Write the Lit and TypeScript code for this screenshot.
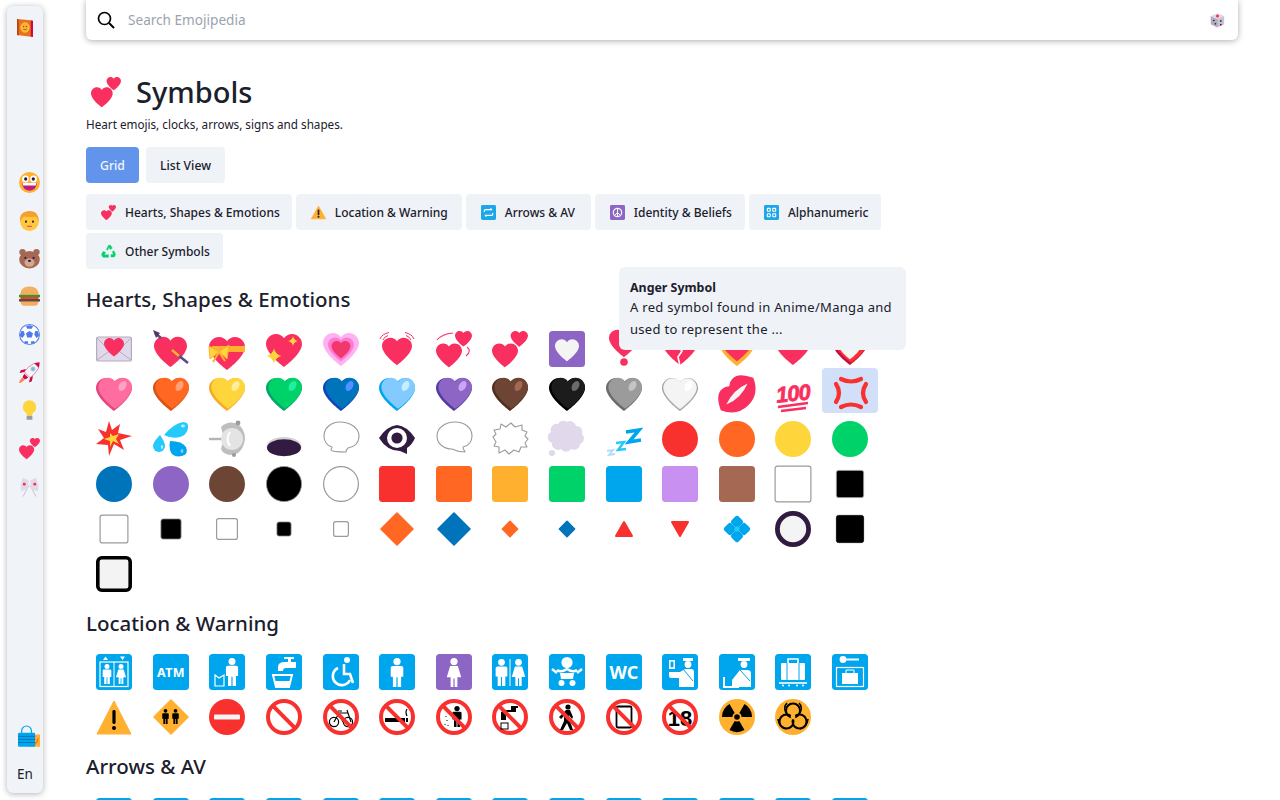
import { LitElement, html, css, svg } from "lit";
import { customElement } from "lit/decorators.js";

const R = "#F92F60", RED = "#F8312F", OR = "#FF6723", AM = "#FFB02E", YE = "#FFD53C", GR = "#00D26A", BL = "#00A6ED", DB = "#0074BA", PU = "#8D65C5", LP = "#C790F1", BR = "#6D4534", LB = "#A56953", GY = "#9B9B9B", DK = "#321B41", WH = "#F4F4F4";
const HP = "M26 2c-3.4 0-6.3 1.7-8 4.3C16.3 3.7 13.4 2 10 2 4.5 2 0 6.5 0 12c0 10 18 23 18 23s18-13 18-23c0-5.5-4.5-10-10-10z";
const hp = (x: number, y: number, w: number, c: string) => svg`<path d=${HP} fill=${c} transform="translate(${x} ${y}) scale(${w / 36})"/>`;
const star = (x: number, y: number, r: number, c: string) => svg`<path fill=${c} d="M${x} ${y - r}Q${x + r * .2} ${y - r * .2} ${x + r} ${y}Q${x + r * .2} ${y + r * .2} ${x} ${y + r}Q${x - r * .2} ${y + r * .2} ${x - r} ${y}Q${x - r * .2} ${y - r * .2} ${x} ${y - r}Z"/>`;
const shade = (dark: string, body: string, hi: string) => svg`${hp(0, 0, 36, dark)}<g transform="translate(2.4 0) scale(.935)">${hp(0, 0, 36, body)}</g><ellipse cx="26.5" cy="10" rx="3.4" ry="5.4" transform="rotate(30 26.5 10)" fill=${hi}/>`;
const circ = (c: string) => svg`<circle cx="18" cy="18" r="18" fill=${c}/>`;
const sq = (c: string, inner: unknown = "") => svg`<rect width="36" height="36" rx="3.5" fill=${c}/>${inner}`;
const box = (s: number, fill: string, stroke: string, sw = 1.2, rx = 2.2) => { const o = (36 - s) / 2; return svg`<rect x=${o + sw / 2} y=${o + sw / 2} width=${s - sw} height=${s - sw} rx=${rx} fill=${fill} stroke=${stroke} stroke-width=${sw}/>`; };
const dia = (r: number, c: string) => svg`<path d="M18 ${18 - r}L${18 + r} 18L18 ${18 + r}L${18 - r} 18Z" fill=${c} stroke=${c} stroke-width="1.6" stroke-linejoin="round"/>`;
const man = (x: number, y: number, h: number, c = "#fff") => svg`<g transform="translate(${x} ${y}) scale(${h / 24})" fill=${c}><circle cy="2.9" r="3"/><path d="M-5.2 8Q-5.2 6.6-3.6 6.6H3.6Q5.2 6.6 5.2 8V15.5H3.4V24H.5V16H-.5V24H-3.4V15.5H-5.2Z"/></g>`;
const wom = (x: number, y: number, h: number, c = "#fff") => svg`<g transform="translate(${x} ${y}) scale(${h / 24})" fill=${c}><circle cy="2.9" r="3"/><path d="M-3.2 6.6H3.2L6 16H2.8V24H.5V17H-.5V24H-2.8V16H-6Z"/></g>`;
const spk = (tail: string, fill: string, stroke: string, sw = 1.1) => svg`<path d=${tail} fill=${fill} stroke=${stroke} stroke-width=${sw} stroke-linejoin="round"/>`;
const twoHearts = svg`${hp(0, 11, 26, R)}${hp(18.6, -1, 17.4, R)}`;
const ban = (inner: unknown) => svg`<circle cx="18" cy="18" r="16" fill="#fff" stroke=${RED} stroke-width="4"/>${inner}<path d="M6.7 6.7L29.3 29.3" stroke=${RED} stroke-width="4"/>`;

const heartsGrid: unknown[] = [
  svg`<rect x=".6" y="6" width="34.8" height="24" rx="1.6" fill="#E1D8EC" stroke="#B4ACBC" stroke-width="1.2"/><path d="M1 7L12 18M35 7L24 18M1 29L12 21M35 29L24 21" stroke="#B4ACBC" fill="none"/>${hp(8, 6, 20, R)}`,
  svg`${hp(1, 4, 33, R)}<path d="M2 2L8 7 M20 20L35 32" stroke="#5B4B8A" stroke-width="2.6"/><path d="M0 -1L7 2L3 7Z" fill="#533566"/><path d="M19 19L26 25" stroke=${AM} stroke-width="2.6"/>`,
  svg`${hp(0, 4, 36, R)}<path d="M3 15H36V21H3Z" fill=${AM}/><path d="M0 15L10 21L1 28Z M20 14L10 21L18 28Z" fill=${YE} stroke=${AM}/><path d="M10 21L4 31M10 21L16 30" stroke=${AM} stroke-width="2"/>`,
  svg`${hp(0, 1, 36, R)}${star(8, 25, 7.5, YE)}${star(27, 10, 4.8, YE)}`,
  svg`${hp(0, 0, 36, "#FFB2F2")}<g transform="translate(5 5) scale(.72)">${hp(0, 0, 36, "#FF7BD2")}</g>${hp(8.5, 9, 19, "#F0386B")}`,
  svg`${hp(3, 5, 30, R)}<path d="M1 8Q3 3 10 1.5M4 9Q5 6 9 4.5M35 8Q33 3 26 1.5M32 9Q31 6 27 4.5" stroke=${R} stroke-width="1" fill="none"/>`,
  svg`${hp(0, 11, 26, R)}${hp(19, -1, 17, R)}<path d="M1 9Q6 3 17 2M31 16Q36 20 30 25" stroke=${R} stroke-width="1.1" fill="none"/>`,
  twoHearts,
  sq(PU, svg`<g transform="translate(6 7)">${hp(0, 0, 24, WH)}</g>`),
  svg`${hp(3, -3, 30, R)}<circle cx="18" cy="31" r="3.8" fill=${R}/>`,
  svg`${hp(0, -1, 36, R)}<path d="M18 8L15 15L20 20L16 26L18 35" stroke="#fff" stroke-width="1.6" fill="none"/>`,
  svg`<path d="M6 10Q10 2 18 0Q26 2 31 10Z" fill=${AM}/>${hp(0, 0, 36, AM)}<g transform="translate(2 -1) scale(.89)">${hp(0, 0, 36, R)}</g>`,
  svg`${hp(0, -1, 36, R)}`,
  svg`${hp(0, -1, 36, "#CA0B4A")}<g transform="translate(2.4 -1) scale(.935)">${hp(0, 0, 36, RED)}</g>${hp(7, 7, 22, WH)}`,
  shade("#E5447F", "#FF6DA0", "#FFA3C4"),
  shade("#D9520F", OR, "#FFA27A"),
  shade("#F9A826", YE, "#FFEC9C"),
  shade("#00A76A", GR, "#21F0A0"),
  shade("#1345B7", DB, "#5092FF"),
  shade("#00A6ED", "#83CBFF", "#C3EFFF"),
  shade("#533BA5", PU, "#C9A6F5"),
  shade("#4E2F20", BR, "#A56953"),
  shade("#000", "#1C1C1C", "#6B6B6B"),
  shade("#6B6B6B", GY, "#C4C4C4"),
  svg`${hp(0, 0, 36, GY)}<g transform="translate(1.2 1) scale(.935)">${hp(0, 0, 36, "#D3D3D3")}</g><g transform="translate(1.5 .5) scale(.92)">${hp(0, 0, 36, WH)}</g><ellipse cx="26.5" cy="10" rx="3.4" ry="5.4" transform="rotate(30 26.5 10)" fill="#fff"/>`,
  svg`<g transform="rotate(-45 18 18)"><path d="M-5 18Q2 3 11 4Q15 4 18 7Q21 4 25 4Q34 3 41 18Q34 34 18 34Q2 34 -5 18Z" fill=${R}/><path d="M3 18Q18 12 33 18Q18 24 3 18Z" fill=${WH}/></g>`,
  svg`<text x="1" y="25" class="hundred" fill=${R} stroke=${R} stroke-width=".7" transform="rotate(-6 18 18)">100</text><path d="M3 31L33 27M6 35L31 32" stroke=${R} stroke-width="2.4"/>`,
  svg`<g fill="none" stroke=${RED} stroke-width="4.2" stroke-linecap="round"><path d="M9 3Q19 8 29 3M9 31Q19 26 29 31M4 8Q10 17 4 26M34 8Q28 17 34 26"/></g>`,
  svg`<path d="M13 0L16 9L24 3L22 12L36 15L24 19L28 29L18 23L13 35L12 24L0 23L8 17L2 8L10 11Z" fill=${RED}/><path d="M14 12L17 15L23 13L20 18L23 23L17 20L14 26L14 20L8 18L14 16Z" fill=${YE}/>`,
  svg`<path d="M11 14Q20 3 30 1Q36 1 35 7Q34 14 27 16Q19 18 11 14Z" fill="#26C9FC"/><path d="M7 14Q12 21 12 25A6 6 0 0 1 0 25Q0 21 7 14Z" fill="#26C9FC"/><path d="M17 20Q29 20 33 26Q36 33 29 35Q19 37 17 29Q16 24 17 20Z" fill=${BL}/><ellipse cx="30" cy="5" rx="2" ry="1.4" fill="#C3EFFF"/><ellipse cx="9" cy="26" rx="1" ry="2" fill="#C3EFFF"/><ellipse cx="29" cy="30" rx="1.4" ry="2" fill="#83CBFF"/>`,
  svg`<path d="M0 18H14" stroke="#B4B4B4" stroke-width="2.4"/><path d="M12 6Q18 0 26 2Q36 6 36 18Q34 32 24 34Q14 34 12 28Q16 18 12 6Z" fill="#BEBEBE"/><circle cx="23" cy="18" r="11" fill="#E4E4E4"/><path d="M21 11Q16 18 21 25" stroke="#fff" stroke-width="2" fill="none"/><circle cx="29" cy="2" r="2.4" fill=${GY}/><circle cx="25" cy="34" r="2" fill=${GY}/>`,
  svg`<ellipse cx="18" cy="25.5" rx="17.5" ry="9.5" fill="#D3D3D3"/><ellipse cx="18" cy="26.7" rx="17" ry="8.5" fill=${DK}/>`,
  spk("M17 1C27 1 36 7 36 15C36 22 31 26 25 27C23 29 23 31 23 31C22 31 9 31 8 29C8 28 9 27 9 26C4 25 1 20 1 15C1 7 8 1 17 1Z", "#fff", GY),
  svg`<path d="M0 17Q8 5 18 4Q28 5 36 17Q33 24 28 27V33L21 30Q8 30 0 17Z" fill=${DK}/><circle cx="18" cy="17" r="10" fill="#fff"/><circle cx="18" cy="17" r="5.6" fill=${DK}/>`,
  spk("M19 1C29 1 36 7 36 15C36 20 33 25 27 26C27 28 28 29 29 31C22 31 18 29 16 28C8 28 1 23 1 15C1 7 9 1 19 1Z", "#fff", GY),
  svg`<path d="M1 16L4 13L2 9L8 8L9 3L14 6L19 2L23 6L30 4L30 9L35 11L33 15L36 18L33 22L35 26L29 26L27 31L22 29L17 33L13 29L7 32L7 26L2 25L4 21Z" fill="#fff" stroke=${GY} stroke-width="1.1" stroke-linejoin="round"/>`,
  svg`<path d="M18 1a6 6 0 0 1 9 4a6 6 0 0 1 6 8a6 6 0 0 1 -2 10a6 6 0 0 1 -9 5a6 6 0 0 1 -10 0a6 6 0 0 1 -9 -6a6 6 0 0 1 -1 -11a6 6 0 0 1 7 -8a6 6 0 0 1 9 -2Z" fill="#E1D8EC"/><circle cx="3" cy="32" r="3" fill="#E1D8EC"/>`,
  svg`<g fill="none" stroke-linejoin="miter"><path d="M20 11L33 9L23 21L35 19" stroke=${BL} stroke-width="3.6"/><path d="M10 22L18 21L12 29L20 28" stroke="#26C9FC" stroke-width="2.4"/><path d="M1 30L7 29L3 34L9 33" stroke="#AEDDFF" stroke-width="1.8"/></g>`,
  circ(RED), circ(OR), circ(YE), circ(GR),
  circ(DB), circ(PU), circ(BR),
  svg`<circle cx="18" cy="18" r="17.6" fill="#000" stroke=${GY} stroke-width=".8"/>`,
  svg`<circle cx="18" cy="18" r="17.4" fill="#fff" stroke=${GY} stroke-width="1.2"/>`,
  sq(RED), sq(OR), sq(AM), sq(GR), sq(BL), sq(LP), sq(LB),
  box(37, "#fff", GY), box(28, "#000", GY, .8),
  box(29, "#fff", GY), box(21, "#000", GY, .8), box(22, "#fff", GY), box(15, "#000", GY, .8), box(16, "#fff", GY),
  dia(16, OR), dia(16, DB), dia(7.6, OR), dia(7.6, DB),
  svg`<path d="M18 11L26 25H10Z" fill=${RED} stroke=${RED} stroke-width="2" stroke-linejoin="round"/>`,
  svg`<path d="M10 11H26L18 25Z" fill=${RED} stroke=${RED} stroke-width="2" stroke-linejoin="round"/>`,
  svg`<g fill=${BL}><rect x="13" y="13" width="10" height="10" rx="2.4" transform="rotate(45 18 18) translate(-5 -5)"/><rect x="13" y="13" width="10" height="10" rx="2.4" transform="rotate(45 18 18) translate(5 -5)"/><rect x="13" y="13" width="10" height="10" rx="2.4" transform="rotate(45 18 18) translate(-5 5)"/><rect x="13" y="13" width="10" height="10" rx="2.4" transform="rotate(45 18 18) translate(5 5)"/></g><circle cx="18" cy="18" r="2.6" fill="#26C9FC"/>`,
  svg`<circle cx="18" cy="18" r="15.6" fill=${WH} stroke=${DK} stroke-width="4.8"/>`,
  box(28, "#000", "#000", .8),
  box(36, "#F3F3F3", "#000", 3.6, 4),
];

const locGrid: unknown[] = [
  sq(BL, svg`<rect x="4" y="8" width="28" height="24.5" fill="none" stroke="#fff" stroke-width="1.2"/><path d="M18 8V32.5" stroke="#fff"/><path d="M9.5 2.6L12 6H7Z M24 2.6H29L26.5 6Z" fill="#fff"/>${man(11, 10, 20)}${wom(25, 10, 20)}`),
  sq(BL, svg`<text x="18" y="22.5" class="atm" fill="#fff">ATM</text>`),
  sq(BL, svg`${man(23, 4, 28)}<path d="M6 21V32H15V21L10 24Z" fill="none" stroke="#fff" stroke-width="1.2"/>`),
  sq(BL, svg`<path d="M12 13Q12 8 19 8H22V5H18V3H28V5H25V8H30V14H20Q17 14 17 17H12Z" fill="#fff"/><path d="M7 21H26L23 33H10Z" fill="none" stroke="#fff" stroke-width="2"/><path d="M9 27H24L23 33H10Z" fill="#fff"/>`),
  sq(BL, svg`<circle cx="24" cy="6" r="3" fill="#fff"/><path d="M21 10V20H27L30 29" fill="none" stroke="#fff" stroke-width="2.6"/><path d="M15 14A9 9 0 1 0 27 26" fill="none" stroke="#fff" stroke-width="2.6"/>`),
  sq(BL, man(18, 4, 29)),
  sq(PU, wom(18, 4, 29)),
  sq(BL, svg`${man(9.5, 5, 27)}<path d="M18 5V32" stroke="#fff"/>${wom(26.5, 5, 27)}`),
  sq(BL, svg`<circle cx="18" cy="8.5" r="5.6" fill="#fff"/><path d="M8 16Q12 19 18 15Q24 19 28 16M3 15L8 19M33 15L28 19" fill="none" stroke="#fff" stroke-width="2.4"/><path d="M11 19H25L24 25H12Z" fill="#fff"/><circle cx="12.5" cy="29" r="3" fill="#fff"/><circle cx="23.5" cy="29" r="3" fill="#fff"/>`),
  sq(BL, svg`<text x="18" y="24.5" class="wc" fill="#fff">WC</text>`),
  sq(BL, svg`<rect x="7" y="6" width="6" height="9" fill="#fff"/><rect x="8.6" y="7.6" width="2.8" height="5.6" fill=${BL}/><path d="M21 4H31V7H21Z" fill="#fff"/><circle cx="26" cy="10.5" r="3.4" fill="#fff"/><path d="M7 18H18L23 15H29Q32 15 32 18V33H17V24H9Q7 24 7 22Z" fill="#fff"/><path d="M21 15L31 27" stroke=${BL}/>`),
  sq(BL, svg`<path d="M19 4H31V7H19Z" fill="#fff"/><circle cx="25" cy="10.5" r="3.4" fill="#fff"/><path d="M13 26L21 16H28Q32 16 32 19V33H13Z" fill="#fff"/><path d="M21 16L31 27" stroke=${BL}/><path d="M5 23V33H20" fill="none" stroke="#fff" stroke-width="2"/>`),
  sq(BL, svg`<rect x="6" y="9" width="24" height="17" rx="1" fill="#fff"/><path d="M13 9V5H23V9" fill="none" stroke="#fff" stroke-width="1.6"/><path d="M12 9V26M24 9V26" stroke=${BL}/><path d="M4 29H32" stroke="#fff" stroke-width="1.6"/><path d="M7 31.5h2M13 31.5h2M21 31.5h2M27 31.5h2" stroke="#fff" stroke-width="1.4"/>`),
  sq(BL, svg`<circle cx="11" cy="5.5" r="3.4" fill="#fff"/><path d="M14 4.5H27V6.5H14Z" fill="#fff"/><rect x="4.5" y="13.5" width="27" height="19" fill="none" stroke="#fff" stroke-width="1.2"/><rect x="10" y="19" width="16" height="11" fill="#fff"/><path d="M14 19V16H22V19" fill="none" stroke="#fff"/>`),
  svg`<path d="M18 2L35 35H1Z" fill=${AM} stroke=${AM} stroke-linejoin="round"/><rect x="16.4" y="11" width="3.2" height="14" rx="1.4" fill="#000"/><circle cx="18" cy="29" r="2" fill="#000"/>`,
  svg`${dia(17, AM)}${man(12.5, 10, 15, "#000")}${man(22.5, 10, 15, "#000")}`,
  svg`${circ(RED)}<rect x="5" y="15.5" width="26" height="5" rx="1" fill=${WH}/>`,
  ban(""),
  ban(svg`<g fill="none" stroke="#000" stroke-width="1.2"><circle cx="11" cy="23" r="4.6"/><circle cx="25" cy="23" r="4.6"/><path d="M11 23L16 14H25L28 23M16 14L20 23M15 12H19M25 14L24 11"/></g>`),
  ban(svg`<rect x="6" y="19" width="20" height="4" fill="#000"/><rect x="27" y="19" width="2" height="4" fill="#000"/><path d="M28 17Q26 13 28 10" stroke="#000" fill="none" stroke-width="1.2"/>`),
  ban(svg`${man(21, 7, 21, "#000")}<path d="M12 12v1M10 17v1M11 21v1M9 25v1M12 26v1" stroke="#000"/>`),
  ban(svg`<path d="M9 13H24V9H19V11H14Z M9 13H14V21H9Z M19 9H26V7H19Z" fill="#000"/><rect x="9" y="24" width="7" height="6" fill="none" stroke="#000"/>`),
  ban(svg`<circle cx="19" cy="8" r="2.6" fill="#000"/><path d="M17 11H21L24 18L23 20L20 16L21 22L24 31H21L18 24L14 31H11L15 22L15 17L12 20L10 18Z" fill="#000"/>`),
  ban(svg`<rect x="10.5" y="7.5" width="15" height="21" rx="1.4" fill="none" stroke="#000" stroke-width="1.8"/>`),
  ban(svg`<text x="18" y="26.5" class="eighteen" fill="#000">18</text>`),
  svg`${circ(AM)}<path d="M18 18L25.5 31A15 15 0 0 1 10.5 31Z M18 18L25.5 5A15 15 0 0 1 33 18Z M18 18L3 18A15 15 0 0 1 10.5 5Z" fill="#000"/><circle cx="18" cy="18" r="4.6" fill=${AM}/><circle cx="18" cy="18" r="2.8" fill="#000"/>`,
  svg`${circ(AM)}<g fill="none" stroke="#000" stroke-width="2"><circle cx="18" cy="11.5" r="7"/><circle cx="11.5" cy="22.5" r="7"/><circle cx="24.5" cy="22.5" r="7"/><path d="M12 4Q8 8 11 14M24 4Q28 8 25 14M3 20Q4 28 11 30M33 20Q32 28 25 30" stroke-width="1.6"/></g><circle cx="18" cy="18" r="2.4" fill=${AM}/>`,
];

const grin = svg`${circ(AM)}<circle cx="11" cy="12" r="5.8" fill="#fff"/><circle cx="25" cy="12" r="5.8" fill="#fff"/><circle cx="11.5" cy="12" r="2.8" fill=${DK}/><circle cx="24.5" cy="12" r="2.8" fill=${DK}/><path d="M5 19H31Q29 32 18 32Q7 32 5 19Z" fill="#BB1D80"/><path d="M6 19H30L29 23H7Z" fill="#fff"/>`;
const person = svg`<circle cx="18" cy="20" r="16" fill="#FFC83D"/><path d="M2 21Q-1 5 14 2Q34 -1 34 21Q32 13 28 11Q18 13 9 11Q4 13 2 21Z" fill="#F59F2E"/><circle cx="12" cy="20" r="1.8" fill=${DK}/><circle cx="24" cy="20" r="1.8" fill=${DK}/><path d="M14 28H22" stroke="#E5447F" stroke-width="2"/>`;
const bear = svg`<circle cx="6" cy="7" r="5.5" fill=${LB}/><circle cx="30" cy="7" r="5.5" fill=${LB}/><ellipse cx="18" cy="20" rx="17.6" ry="15" fill=${LB}/><ellipse cx="18" cy="25" rx="8.6" ry="7" fill="#D3A88F"/><circle cx="11" cy="17" r="1.8" fill=${DK}/><circle cx="25" cy="17" r="1.8" fill=${DK}/><ellipse cx="18" cy="22" rx="2.6" ry="2" fill=${DK}/>`;
const burger = svg`<path d="M2 15Q3 1 18 1Q33 1 34 15Z" fill="#F3AD61"/><path d="M8 7l1 1M14 4l1 1M21 5l1 1M27 8l1 1M17 9l1 1" stroke="#FFE3A8" stroke-width="1.4"/><path d="M0 15H36V19Q30 22 24 19Q18 22 12 19Q6 22 0 19Z" fill="#44911B"/><path d="M3 19H33V22H3Z" fill=${RED}/><rect y="22" width="36" height="5" rx="2" fill=${BR}/><path d="M3 27H33Q33 34 27 34H9Q3 34 3 27Z" fill="#F3AD61"/>`;
const ball = svg`<circle cx="18" cy="18" r="17" fill="#fff" stroke="#5B7FE8" stroke-width="1.8"/><path d="M18 12L24 16L22 23H14L12 16Z" fill="#4F7CEB"/><path d="M18 2L24 4L22 8L14 8L12 4Z M32 12L35 20L30 24L26 18L28 12Z M4 12L1 20L6 24L10 18L8 12Z M10 29L16 30L15 34L9 33Z M26 29L20 30L21 34L27 33Z" fill="#4F7CEB"/>`;
const rocket = svg`<path d="M35 1Q24 1 16 9L9 17L19 27L27 20Q35 12 35 1Z" fill="#F4F4F4" stroke="#E83E6C"/><path d="M35 1Q30 1 26 2L34 10Q35 6 35 1Z" fill="#CA0B4A"/><path d="M12 12L3 14L1 19L9 17Z M24 24L22 33L17 35L19 27Z M9 20L16 27L10 30L6 26Z" fill="#CA0B4A"/><circle cx="24" cy="12" r="3.8" fill="#83B7E9" stroke="#AEDDFF"/><path d="M6 26L10 30Q4 36 0 36Q0 32 6 26Z" fill="#FF8257"/>`;
const bulb = svg`<circle cx="18" cy="12" r="11.6" fill=${YE}/><path d="M12 20H24L22.5 27H13.5Z" fill=${YE}/><rect x="13" y="27" width="10" height="7" rx="1.5" fill=${GY}/>`;
const flags = svg`<path d="M17 16L7 35M19 16L29 35" stroke="#B4ACBC" stroke-width="1.2"/><path d="M17 8L7 3L3 15L3 26L14 23Z" fill="#E1D8EC"/><path d="M19 8L29 3L33 15L33 26L22 23Z" fill="#E1D8EC"/><circle cx="9" cy="14" r="2.4" fill=${RED}/><circle cx="27" cy="14" r="2.4" fill=${RED}/>`;
const sideIcons = [grin, person, bear, burger, ball, rocket, bulb, twoHearts, flags];
const book = svg`<path d="M0 0L36 3V36L0 32Z" fill="#E8701F"/><path d="M31 3L36 4V36L31 35Z" fill="#CA0B4A"/><path d="M0 0V32L4 33V1Z" fill="#B8470F"/><circle cx="18" cy="17" r="9.6" fill=${AM} stroke=${YE} stroke-width="1.4"/><circle cx="15" cy="15" r="1.2" fill=${DK}/><circle cx="21" cy="15" r="1.2" fill=${DK}/><path d="M14 20Q18 23 22 20" stroke=${DK} fill="none"/>`;
const bag = svg`<rect x="18" y="14" width="18" height="20" fill=${AM}/><path d="M22 32Q30 32 33 20" stroke=${OR} stroke-width="2" fill="none"/><path d="M6 12V8A8 8 0 0 1 22 8V12" fill="none" stroke=${BL} stroke-width="2"/><rect y="11" width="28" height="23" rx="2" fill=${BL}/><path d="M0 17H28M0 22H28M0 27H28" stroke=${DB} stroke-width="1.6"/>`;
const dice = svg`<path d="M18 1L34 8V27L18 35L2 27V8Z" fill="#C9C3D2"/><path d="M18 15V35L2 27V8Z" fill="#B4ACBC"/><path d="M18 1L34 8L18 15L2 8Z" fill="#E1D8EC"/><circle cx="18" cy="7" r="3.6" fill=${RED}/><circle cx="9" cy="18" r="2" fill=${DK}/><circle cx="26" cy="19" r="2" fill=${DK}/><circle cx="13" cy="26" r="2" fill=${DK}/><circle cx="26" cy="28" r="2" fill=${DK}/>`;

const pills: [string, unknown][] = [
  ["Hearts, Shapes & Emotions", twoHearts],
  ["Location & Warning", svg`<path d="M18 3L35 33H1Z" fill=${AM} stroke=${AM} stroke-width="2" stroke-linejoin="round"/><rect x="16" y="11" width="4" height="13" fill=${DK}/><circle cx="18" cy="28" r="2.4" fill=${DK}/>`],
  ["Arrows & AV", sq("#1EA7E8", svg`<path d="M8 17V14Q8 11 11 11H25L23 8M28 19V22Q28 25 25 25H11L13 28" fill="none" stroke="#fff" stroke-width="3"/>`)],
  ["Identity & Beliefs", sq(PU, svg`<circle cx="18" cy="18" r="10" fill="none" stroke=${WH} stroke-width="3"/><path d="M18 8V28M18 18L11 25M18 18L25 25" stroke=${WH} stroke-width="2.4"/>`)],
  ["Alphanumeric", sq("#1EA7E8", svg`<g fill="none" stroke="#fff" stroke-width="2.6"><rect x="8" y="8" width="7" height="7" rx="1"/><rect x="21" y="8" width="7" height="7" rx="1"/><rect x="8" y="21" width="7" height="7" rx="1"/><rect x="21" y="21" width="7" height="7" rx="1"/></g>`)],
  ["Other Symbols", svg`<g fill=${GR} stroke=${GR} stroke-linejoin="round"><path d="M13 13L18 3H23L27 10L22 13L19 8L16 15Z"/><path d="M31 16L35 25L32 31H24V25H30L27 19Z"/><path d="M5 18L1 26L5 32H18V26H8L11 20Z"/></g>`],
];

@customElement("app-root")
export class AppRoot extends LitElement {
  static styles = css`
    :host { display: flex; height: 800px; overflow: hidden; position: relative; background: #fff; color: #1a202c; font-family: "Noto Sans", sans-serif; }
    svg { display: block; overflow: visible; flex: none; }
    .hundred { font: italic 700 22px "Liberation Sans", sans-serif; letter-spacing: -1px; }
    .atm { font: 700 12.5px "Noto Sans", sans-serif; text-anchor: middle; letter-spacing: .4px; }
    .wc { font: 700 18px "Noto Sans", sans-serif; text-anchor: middle; }
    .eighteen { font: 700 22px "Liberation Sans", sans-serif; text-anchor: middle; }
    .side { width: 36px; margin: 6px 0 7px 7px; flex: none; background: #f0f3f8; border-radius: 6px; box-shadow: 0 1px 6px rgba(0,0,0,.3); display: flex; flex-direction: column; align-items: center; }
    .book { width: 16px; height: 18px; margin-top: 13px; }
    .cats { margin: 135px 0 0 8px; display: flex; flex-direction: column; align-items: center; gap: 17px; }
    .cat { width: 21px; height: 21px; }
    .bottom { margin-top: auto; display: flex; flex-direction: column; align-items: center; padding-bottom: 10px; }
    .bag { width: 22px; height: 22px; margin: 0 0 17px 8px; }
    .en { font-size: 13.5px; line-height: 18px; }
    .main { margin-left: 43px; width: 1152px; flex: none; }
    .search { height: 40px; background: #fff; border-radius: 0 0 6px 6px; box-shadow: 0 1px 6px rgba(0,0,0,.32); display: flex; align-items: center; padding: 0 13px 0 11px; }
    .glass { width: 18px; height: 18px; }
    .ph { margin-left: 13px; font-size: 13.6px; line-height: 18px; padding-bottom: 1px; color: #9ca3af; flex: 1; }
    .dice { width: 15px; height: 15px; }
    .title { display: flex; align-items: center; margin-top: 30px; height: 44px; }
    .title svg { width: 30px; height: 30px; margin: 0 0 0 5px; }
    .title h1 { margin: 0 0 0 15px; font-size: 29px; font-weight: 500; line-height: 44px; }
    .desc { font-size: 11.7px; line-height: 18px; margin: 1px 0 0; }
    .views { display: flex; gap: 7px; margin-top: 14px; }
    .btn { height: 36px; display: flex; align-items: center; justify-content: center; border-radius: 4px; font-size: 12.2px; font-weight: 500; background: #eff2f7; }
    .grid-btn { width: 53px; background: #6394ec; color: #f2f6fe; }
    .list-btn { width: 79px; }
    .pills { display: flex; flex-wrap: wrap; gap: 3px 4px; width: 800px; margin-top: 11px; }
    .pill { height: 36px; display: flex; align-items: center; border-radius: 4px; background: #eff2f7; font-size: 12px; font-weight: 500; padding: 0 13px 0 15px; gap: 9px; box-sizing: border-box; }
    .pill:nth-child(1) { padding-right: 12px; }
    .pill:nth-child(2) { padding-right: 14px; }
    .pill:nth-child(3) { min-width: 125px; }
    .pill svg { width: 15px; height: 15px; }
    h2 { margin: 14.5px 0 9px; font-size: 20.5px; line-height: 30px; font-weight: 500; }
    .hearts-h { margin: 14.5px 0 9.5px; }
    .grid { display: grid; grid-template-columns: repeat(14, 56.6px); grid-auto-rows: 45px; }
    .cell { display: flex; align-items: center; justify-content: center; padding-top: 6px; box-sizing: border-box; border-radius: 4px; }
    .cell.hi { background: #d2dff8; }
    .cell svg { width: 36px; height: 36px; }
    .tip { position: absolute; left: 619px; top: 267px; width: 287px; height: 83px; box-sizing: border-box; background: #eff2f7; border-radius: 6px; padding: 12px 11px; font-size: 13px; line-height: 22px; letter-spacing: .3px; }
    .tip b { display: block; font-size: 12.4px; line-height: 17px; font-weight: 700; letter-spacing: 0; }
  `;

  cellGrid(items: unknown[], hi = -1) {
    return html`<div class="grid">${items.map((it, i) => html`<div class="cell ${i === hi ? "hi" : ""}"><svg viewBox="0 0 36 36">${it}</svg></div>`)}</div>`;
  }

  render() {
    const blues = Array.from({ length: 14 }, () => sq(BL));
    return html`
      <nav class="side">
        <svg class="book" viewBox="0 0 36 36" preserveAspectRatio="none">${book}</svg>
        <div class="cats">${sideIcons.map((s) => html`<svg class="cat" viewBox="0 0 36 36">${s}</svg>`)}</div>
        <div class="bottom">
          <svg class="bag" viewBox="0 0 36 36">${bag}</svg>
          <div class="en">En</div>
        </div>
      </nav>
      <main class="main">
        <div class="search">
          <svg class="glass" viewBox="0 0 18 18"><circle cx="7.5" cy="7.5" r="6" fill="none" stroke="#000" stroke-width="1.7"/><path d="M12 12L17 17" stroke="#000" stroke-width="2"/></svg>
          <div class="ph">Search Emojipedia</div>
          <svg class="dice" viewBox="0 0 36 36">${dice}</svg>
        </div>
        <div class="title"><svg viewBox="0 0 36 36">${twoHearts}</svg><h1>Symbols</h1></div>
        <p class="desc">Heart emojis, clocks, arrows, signs and shapes.</p>
        <div class="views"><div class="btn grid-btn">Grid</div><div class="btn list-btn">List View</div></div>
        <div class="pills">${pills.map(([t, ic]) => html`<div class="pill"><svg viewBox="0 0 36 36">${ic}</svg>${t}</div>`)}</div>
        <h2 class="hearts-h">Hearts, Shapes &amp; Emotions</h2>
        ${this.cellGrid(heartsGrid, 27)}
        <h2>Location &amp; Warning</h2>
        ${this.cellGrid(locGrid)}
        <h2>Arrows &amp; AV</h2>
        ${this.cellGrid(blues)}
      </main>
      <div class="tip"><b>Anger Symbol</b>A red symbol found in Anime/Manga and used to represent the ...</div>
    `;
  }
}
